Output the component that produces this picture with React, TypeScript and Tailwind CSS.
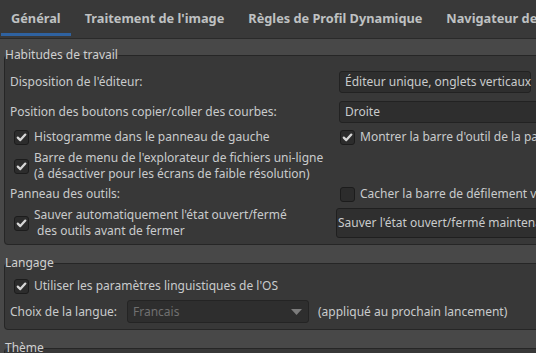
import React from 'react';

function Check({ on = true }: { on?: boolean }) {
  return (
    <span className="flex h-[15px] w-[15px] shrink-0 items-center justify-center rounded-[3px] border border-[#1c1c1c] bg-[#2c2c2c]">
      {on && (
        <svg width="11" height="11" viewBox="0 0 11 11">
          <path d="M1.8 5.6 L4.3 8.1 L9.3 2.6" fill="none" stroke="#d6d6d6" strokeWidth="2.3" strokeLinecap="round" strokeLinejoin="round" />
        </svg>
      )}
    </span>
  );
}

function Frame({ title, className, children }: { title: string; className?: string; children?: React.ReactNode }) {
  return (
    <fieldset className={cn('ml-[4px] w-[640px] rounded-[4px] border border-[#262626] bg-[#383838] px-[5px]', className)}>
      <legend className="ml-[-5px] px-0 text-[12px] leading-[16px] text-[#d0d0d0]">{title}</legend>
      {children}
    </fieldset>
  );
}

const tabs = ['Général', "Traitement de l'image", 'Règles de Profil Dynamique', 'Navigateur de fichiers'];

export default function App() {
  return (
    <div className="h-[353px] w-[536px] overflow-hidden bg-[#484848] text-[12px] text-[#c9cbcc]" style={{ fontFamily: '"Noto Sans", "Open Sans", sans-serif' }}>
      <div className="flex h-[39px] gap-1 border-b border-[#2a2a2a] bg-[#393939] pl-[1px]">
        {tabs.map((t, i) => (
          <div
            key={t}
            className={cn(
              'flex h-[36px] shrink-0 items-center whitespace-nowrap border-b-[3px] px-[10px] pt-[4px] text-[12.75px] font-bold text-[#bfc1c2]',
              i === 0 ? 'border-[#2f62a0]' : 'border-transparent'
            )}
          >
            {t}
          </div>
        ))}
      </div>

      <Frame title="Habitudes de travail" className="mt-[8px] pb-[5px]">
        <div className="mt-[8px] flex h-[22px] items-center">
          <span className="w-[329px]">Disposition de l'éditeur:</span>
          <div className="flex h-[22px] w-[192px] items-center rounded-[3px] border border-[#222] bg-[#2e2e2e] pl-[5px] whitespace-nowrap">
            Éditeur unique, onglets verticaux
          </div>
        </div>
        <div className="mt-[8px] flex h-[22px] items-center">
          <span className="w-[329px]">Position des boutons copier/coller des courbes:</span>
          <div className="flex h-[22px] w-[260px] items-center rounded-[3px] border border-[#222] bg-[#2e2e2e] pl-[5px]">
            Droite
          </div>
        </div>
        <div className="mt-[6px] flex h-[16px] items-center">
          <div className="flex w-[330px] items-center gap-[5px] pl-[4px]">
            <Check />
            <span>Histogramme dans le panneau de gauche</span>
          </div>
          <div className="flex items-center gap-[5px] whitespace-nowrap">
            <Check />
            <span>Montrer la barre d'outil de la palette</span>
          </div>
        </div>
        <div className="mt-[5px] flex h-[32px] items-center">
          <div className="flex w-[330px] items-center gap-[5px] pl-[4px]">
            <Check />
            <span className="leading-[16px]">
              Barre de menu de l'explorateur de fichiers uni-ligne
              <br />
              (à désactiver pour les écrans de faible résolution)
            </span>
          </div>
        </div>
        <div className="mt-[4px] flex h-[16px] items-center">
          <span className="w-[330px]">Panneau des outils:</span>
          <div className="flex items-center gap-[5px] whitespace-nowrap">
            <Check on={false} />
            <span>Cacher la barre de défilement verticale</span>
          </div>
        </div>
        <div className="mt-[5px] flex h-[32px] items-center">
          <div className="flex w-[326px] items-center gap-[5px] pl-[4px]">
            <Check />
            <span className="whitespace-pre leading-[16px]">
              {"Sauver automatiquement l'état ouvert/fermé\n des outils avant de fermer"}
            </span>
          </div>
          <div className="flex h-[30px] w-[280px] items-center rounded-[3px] border border-[#1f1f1f] bg-[#2f2f2f] pl-[1px] whitespace-nowrap">
            Sauver l'état ouvert/fermé maintenant
          </div>
        </div>
      </Frame>

      <Frame title="Langage" className="mt-[10px] pb-[6px]">
        <div className="mt-[7px] flex h-[16px] items-center gap-[5px] pl-[4px]">
          <Check />
          <span>Utiliser les paramètres linguistiques de l'OS</span>
        </div>
        <div className="mt-[6px] flex h-[23px] items-center">
          <span className="w-[117px]">Choix de la langue:</span>
          <div className="flex h-[23px] w-[182px] items-center justify-between rounded-[3px] border border-[#242424] bg-[#2e2e2e] pl-[5px] pr-[6px] text-[#707070]">
            <span>Francais</span>
            <svg width="11" height="6" viewBox="0 0 11 6">
              <path d="M0 0 H11 L5.5 6 Z" fill="#7c7c7c" />
            </svg>
          </div>
          <span className="ml-[9px]">(appliqué au prochain lancement)</span>
        </div>
      </Frame>

      <Frame title="Thème" className="mt-[10px] h-[40px]" />
    </div>
  );
}

function cn(...classes: any[]) {
  return classes.filter(Boolean).join(' ');
}
